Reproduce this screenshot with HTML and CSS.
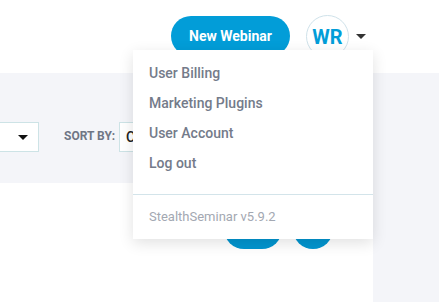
FILE: index.html
```html
<!DOCTYPE html>
<html>
<head>
<meta charset="utf-8">
<link rel="stylesheet" href="styles.css">
</head>
<body>
<header class="topbar">
  <button class="btn-new">New Webinar</button>
  <div class="user">
    <div class="avatar">WR</div>
    <span class="caret"></span>
    <div class="menu">
      <ul class="menu-list">
        <li>User Billing</li>
        <li>Marketing Plugins</li>
        <li>User Account</li>
        <li>Log out</li>
      </ul>
      <div class="menu-footer">StealthSeminar v5.9.2</div>
    </div>
  </div>
</header>
<main class="main">
  <div class="content">
    <div class="filters">
      <div class="select small"><span class="caret dark"></span></div>
      <span class="sort-label">SORT BY:</span>
      <div class="select sort">C</div>
    </div>
    <div class="card">
      <span class="pill"></span>
      <span class="circle"></span>
    </div>
  </div>
  <div class="side"></div>
</main>
</body>
</html>
```
FILE: styles.css
```css
* { box-sizing: border-box; }
html, body { margin: 0; height: 100%; }
body {
  font-family: Roboto, "Noto Sans", sans-serif;
  background: #fff;
  overflow: hidden;
}
.topbar {
  height: 73px;
  display: flex;
  align-items: center;
  justify-content: flex-end;
  padding-right: 73px;
  background: #fff;
}
.btn-new {
  width: 119px;
  height: 40px;
  border: none;
  border-radius: 20px;
  background: #029dd8;
  color: #fff;
  font-family: Roboto, sans-serif;
  font-weight: 700;
  font-size: 14px;
  padding: 0;
  margin-right: 16px;
  margin-top: -1px;
}
.user {
  position: relative;
  display: flex;
  align-items: center;
}
.avatar {
  width: 43px;
  height: 43px;
  border-radius: 50%;
  border: 1px solid #cfe2ea;
  color: #029dd8;
  font-weight: 700;
  font-size: 20px;
  display: flex;
  align-items: center;
  justify-content: center;
}
.caret {
  width: 0;
  height: 0;
  border-left: 5px solid transparent;
  border-right: 5px solid transparent;
  border-top: 5px solid #333;
  margin-left: 7px;
}
.menu {
  position: absolute;
  top: 35px;
  left: -173px;
  width: 240px;
  background: #fff;
  box-shadow: 0 4px 14px rgba(0,0,0,0.12);
  z-index: 10;
}
.menu-list {
  list-style: none;
  margin: 0;
  padding: 8px 0 16px;
}
.menu-list li {
  height: 30px;
  line-height: 30px;
  padding-left: 16px;
  font-size: 14px;
  font-weight: 500;
  color: #747b8a;
}
.menu-footer {
  border-top: 1px solid #d3e4ea;
  height: 45px;
  line-height: 44px;
  padding-left: 16px;
  font-size: 13px;
  color: #a3a8b2;
}
.main {
  display: flex;
  height: calc(100% - 73px);
  background: #f4f5f9;
}
.content {
  width: 373px;
  display: flex;
  flex-direction: column;
}
.filters {
  height: 110px;
  display: flex;
  align-items: flex-start;
  padding-top: 49px;
}
.select {
  height: 30px;
  background: #fff;
  border: 1px solid #cde3e6;
  display: flex;
  align-items: center;
}
.select.small {
  width: 39px;
  border-left: none;
  padding-left: 18px;
}
.caret.dark { margin-left: 0; border-top-color: #111; }
.sort-label {
  margin-left: 25px;
  margin-top: 7px;
  font-size: 12px;
  font-weight: 700;
  color: #6f7685;
  width: 55px;
}
.select.sort {
  width: 140px;
  padding-left: 6px;
  font-size: 14px;
  font-weight: 500;
  color: #222;
}
.card {
  flex: 1;
  background: #fff;
  display: flex;
  gap: 11px;
  padding: 26px 0 0 224px;
}
.pill {
  width: 58px;
  height: 40px;
  border-radius: 20px;
  background: #0295cf;
}
.circle {
  width: 40px;
  height: 40px;
  border-radius: 50%;
  background: #0295cf;
}
.side { flex: 1; }
```
